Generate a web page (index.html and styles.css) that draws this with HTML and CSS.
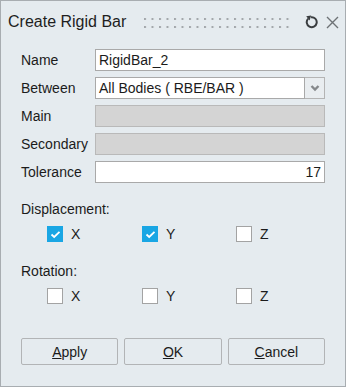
FILE: index.html
```html
<!DOCTYPE html>
<html>
<head>
<meta charset="utf-8">
<link rel="stylesheet" href="styles.css">
</head>
<body>
<div class="panel">
  <div class="titlebar">
    <span class="title">Create Rigid Bar</span>
    <svg class="grip" width="148" height="10" viewBox="0 0 148 10">
      <defs>
        <pattern id="dots" width="7.5" height="8" patternUnits="userSpaceOnUse">
          <rect x="0" y="0" width="2" height="2" fill="#a3a7ab"/>
        </pattern>
      </defs>
      <rect x="0" y="0" width="148" height="10" fill="url(#dots)"/>
    </svg>
    <svg class="reset" width="14" height="14" viewBox="0 0 14 14">
      <path d="M4.2 3.6 A5 5 0 1 0 7 2.2" fill="none" stroke="#3a3d40" stroke-width="2"/>
      <path d="M2.2 1.2 L7.2 0.6 L5.6 5.4 Z" fill="#3a3d40"/>
    </svg>
    <svg class="close" width="13" height="13" viewBox="0 0 13 13">
      <path d="M1 1 L12 12 M12 1 L1 12" stroke="#6e7276" stroke-width="1.4"/>
    </svg>
  </div>

  <div class="form">
    <label class="lbl">Name</label>
    <div class="field">RigidBar_2</div>

    <label class="lbl">Between</label>
    <div class="select">
      <div class="field sel-text">All Bodies ( RBE/BAR )</div>
      <div class="sel-btn">
        <svg width="10" height="8" viewBox="0 0 10 8"><path d="M1.5 2 L5 5.5 L8.5 2" fill="none" stroke="#85888b" stroke-width="2.4"/></svg>
      </div>
    </div>

    <label class="lbl">Main</label>
    <div class="field disabled"></div>

    <label class="lbl">Secondary</label>
    <div class="field disabled"></div>

    <label class="lbl">Tolerance</label>
    <div class="field num">17</div>
  </div>

  <div class="section first">Displacement:</div>
  <div class="checks">
    <div class="chk"><span class="box on"><svg width="11" height="9" viewBox="0 0 11 9"><path d="M1.5 4.5 L4.2 7 L9.5 1.8" fill="none" stroke="#fff" stroke-width="1.8"/></svg></span>X</div>
    <div class="chk"><span class="box on"><svg width="11" height="9" viewBox="0 0 11 9"><path d="M1.5 4.5 L4.2 7 L9.5 1.8" fill="none" stroke="#fff" stroke-width="1.8"/></svg></span>Y</div>
    <div class="chk"><span class="box"></span>Z</div>
  </div>

  <div class="section">Rotation:</div>
  <div class="checks">
    <div class="chk"><span class="box"></span>X</div>
    <div class="chk"><span class="box"></span>Y</div>
    <div class="chk"><span class="box"></span>Z</div>
  </div>

  <div class="buttons">
    <button class="btn"><u>A</u>pply</button>
    <button class="btn"><u>O</u>K</button>
    <button class="btn"><u>C</u>ancel</button>
  </div>
</div>
</body>
</html>
```

FILE: styles.css
```css
html, body {
  margin: 0;
  padding: 0;
}
body {
  font-family: "Liberation Sans", Arial, sans-serif;
  color: #1b1b1b;
  background: #e5ebef;
}
.panel {
  width: 346px;
  height: 387px;
  box-sizing: border-box;
  border: 1px solid #a8adb1;
  background: #e5ebef;
  display: flex;
  flex-direction: column;
}
.titlebar {
  height: 42px;
  display: flex;
  align-items: center;
  padding-left: 7px;
}
.title {
  font-size: 16px;
  color: #1e1e1e;
}
.grip {
  margin-left: 18px;
  margin-top: 2px;
}
.reset {
  margin-left: 12px;
}
.close {
  margin-left: 8px;
}
.form {
  margin-top: 6px;
  padding: 0 20px;
  display: grid;
  grid-template-columns: 74px 1fr;
  grid-auto-rows: 22px;
  row-gap: 6px;
  align-items: center;
}
.lbl {
  font-size: 14px;
}
.field {
  height: 22px;
  box-sizing: border-box;
  border: 1px solid #a9a9a9;
  background: #fff;
  font-size: 14px;
  line-height: 20px;
  padding: 0 3px;
  white-space: nowrap;
}
.field.disabled {
  background: #d4d4d4;
  border-color: #b9b9b9;
}
.field.num {
  text-align: right;
  padding-right: 3px;
}
.select {
  display: flex;
  height: 22px;
}
.sel-text {
  flex: 1;
}
.sel-btn {
  width: 20px;
  height: 22px;
  box-sizing: border-box;
  border: 1px solid #b4b4b4;
  border-left: none;
  background: #e9edf0;
  display: flex;
  align-items: center;
  justify-content: center;
}
.section {
  font-size: 14px;
  padding-left: 20px;
  margin-top: 21px;
  line-height: 16px;
}
.section.first {
  margin-top: 18px;
}
.checks {
  display: grid;
  grid-template-columns: 95px 94px 94px;
  padding-left: 46px;
  margin-top: 9px;
  height: 16px;
}
.chk {
  display: flex;
  align-items: center;
  font-size: 14px;
  gap: 8px;
}
.box {
  width: 16px;
  height: 16px;
  box-sizing: border-box;
  border: 1px solid #a3a3a3;
  background: #fff;
  display: flex;
  align-items: center;
  justify-content: center;
}
.box.on {
  background: #19a6e4;
  border-color: #19a6e4;
}
.buttons {
  margin-top: auto;
  margin-bottom: 21px;
  padding: 0 20px;
  display: flex;
  gap: 6px;
}
.btn {
  flex: 1;
  height: 27px;
  box-sizing: border-box;
  border: 1px solid #b2b4b6;
  border-radius: 2px;
  background: #e5ebef;
  font-family: "Liberation Sans", Arial, sans-serif;
  font-size: 14px;
  color: #1b1b1b;
  padding: 0;
}
```
